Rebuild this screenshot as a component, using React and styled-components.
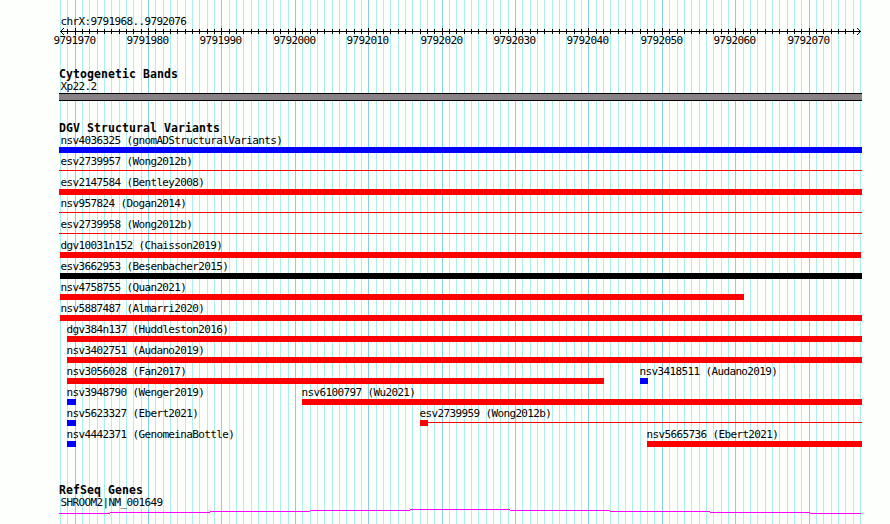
import React from 'react';
import styled, { createGlobalStyle } from 'styled-components';

const GlobalStyle = createGlobalStyle`
    body {
        margin: 0;
        background-color: #fdfffc;
    }
`;

const FIRST_BASE = 9791968;
const LAST_BASE = 9792077;
const LEFT = 60;
const WIDTH = 800;

const baseToX = base => Math.round(LEFT + ((base - FIRST_BASE) * WIDTH) / (LAST_BASE - FIRST_BASE));

const bases = Array.from({ length: LAST_BASE - FIRST_BASE + 1 }, (_, i) => FIRST_BASE + i);
const majorBases = bases.filter(base => base % 10 === 0);

const RED = '#ff0000';
const BLUE = '#0000ff';
const BLACK = '#000000';

const rows = [
    [{ name: 'nsv4036325 (gnomADStructuralVariants)', start: 59, end: 862, color: BLUE }],
    [{ name: 'esv2739957 (Wong2012b)', start: 59, end: 862, color: RED, thin: true }],
    [{ name: 'esv2147584 (Bentley2008)', start: 59, end: 862, color: RED }],
    [{ name: 'nsv957824 (Dogan2014)', start: 59, end: 862, color: RED, thin: true }],
    [{ name: 'esv2739958 (Wong2012b)', start: 59, end: 862, color: RED, thin: true }],
    [{ name: 'dgv10031n152 (Chaisson2019)', start: 60, end: 861, color: RED }],
    [{ name: 'esv3662953 (Besenbacher2015)', start: 60, end: 862, color: BLACK }],
    [{ name: 'nsv4758755 (Quan2021)', start: 60, end: 744, color: RED }],
    [{ name: 'nsv5887487 (Almarri2020)', start: 60, end: 862, color: RED }],
    [{ name: 'dgv384n137 (Huddleston2016)', start: 67, end: 862, color: RED }],
    [{ name: 'nsv3402751 (Audano2019)', start: 67, end: 862, color: RED }],
    [
        { name: 'nsv3056028 (Fan2017)', start: 67, end: 604, color: RED },
        { name: 'nsv3418511 (Audano2019)', start: 640, end: 648, color: BLUE },
    ],
    [
        { name: 'nsv3948790 (Wenger2019)', start: 67, end: 76, color: BLUE },
        { name: 'nsv6100797 (Wu2021)', start: 302, end: 862, color: RED },
    ],
    [
        { name: 'nsv5623327 (Ebert2021)', start: 67, end: 76, color: BLUE },
        { name: 'esv2739959 (Wong2012b)', start: 420, end: 862, color: RED, thin: true, block: 8 },
    ],
    [
        { name: 'nsv4442371 (GenomeinaBottle)', start: 67, end: 76, color: BLUE },
        { name: 'nsv5665736 (Ebert2021)', start: 647, end: 862, color: RED },
    ],
];

const geneSteps = [
    { width: 51, drop: 4 },
    { width: 100, drop: 3 },
    { width: 100, drop: 2 },
    { width: 100, drop: 1 },
    { width: 100, drop: 0 },
    { width: 100, drop: 1 },
    { width: 100, drop: 2 },
    { width: 100, drop: 3 },
    { width: 51, drop: 4 },
];

const Browser = styled.main`
    position: relative;
    width: 890px;
    height: 524px;
    overflow: hidden;
    background-color: #fdfffc;
    color: #000;
    font-family: 'DejaVu Sans Mono', monospace;
    font-size: 11px;
    letter-spacing: -0.63px;
`;

const GridLines = styled.svg`
    position: absolute;
    top: 0;
    left: 0;
`;

const Tracks = styled.div`
    position: relative;
    display: flex;
    flex-direction: column;
    padding-top: 16px;
`;

const Region = styled.div`
    height: 12px;
    line-height: 12px;
    padding-left: 60.5px;
`;

const Ruler = styled.svg`
    display: block;
    height: 7px;
`;

const RulerLabels = styled.div`
    display: flex;
    height: 12px;
    line-height: 12px;
    margin-bottom: 21px;
`;

const RulerLabel = styled.span`
    flex: none;
    width: 42px;
    margin-left: ${props => props.$gap}px;
    white-space: nowrap;
`;

const Track = styled.section`
    height: ${props => props.$height}px;
`;

const TrackTitle = styled.h2`
    height: 12px;
    margin: 0 0 ${props => props.$space || 0}px 59px;
    font-size: 11.5px;
    font-weight: bold;
    line-height: 12px;
    letter-spacing: 0.08px;
`;

const Label = styled.div`
    height: 12px;
    line-height: ${props => props.$line || 12}px;
    margin-left: ${props => props.$shift}px;
    white-space: nowrap;
`;

const Band = styled.div`
    box-sizing: border-box;
    width: 803px;
    height: 8px;
    margin: 1px 0 0 59px;
    border: solid #000;
    border-width: 1px 0;
    background-color: #888286;
`;

const VariantRow = styled.div`
    display: flex;
    height: 21px;
`;

const Variant = styled.div`
    flex: none;
    width: ${props => props.$width}px;
    margin-left: ${props => props.$gap}px;
`;

const Bar = styled.div`
    height: 6px;
    background-color: ${props => props.$color};
`;

const ThinBar = styled.div`
    display: flex;
    height: 6px;

    &::before {
        content: '';
        width: ${props => props.$block || 0}px;
        background-color: ${props => props.$color};
    }

    &::after {
        content: '';
        flex: 1;
        height: 1px;
        margin-top: 2px;
        background-color: ${props => props.$color};
    }
`;

const GeneLine = styled.div`
    display: flex;
    margin: 1px 0 0 59px;
`;

const GeneStep = styled.div`
    width: ${props => props.$width}px;
    height: 1px;
    margin-top: ${props => props.$drop}px;
    background-color: #ff00ff;
`;

const Grid = () => (
    <GridLines width="890" height="524" shapeRendering="crispEdges">
        {bases.map(base => (
            <rect
                key={base}
                x={baseToX(base)}
                y="0"
                width="1"
                height="524"
                fill={base % 10 === 0 ? '#87ceeb' : '#afeeee'}
            />
        ))}
    </GridLines>
);

const Scale = () => (
    <Ruler width="890" height="7" shapeRendering="crispEdges">
        <rect x="60" y="3" width="801" height="1" />
        {bases.slice(1, -1).map(base => (
            <rect
                key={base}
                x={baseToX(base)}
                y={base % 10 === 0 ? 0 : 1}
                width="1"
                height={base % 10 === 0 ? 7 : 5}
            />
        ))}
        {[1, 2, 3].map(i => (
            <g key={i}>
                <rect x={60 + i} y={3 - i} width="1" height="1" />
                <rect x={60 + i} y={3 + i} width="1" height="1" />
                <rect x={860 - i} y={3 - i} width="1" height="1" />
                <rect x={860 - i} y={3 + i} width="1" height="1" />
            </g>
        ))}
    </Ruler>
);

const App = () => {
    return (
        <>
            <GlobalStyle />
            <Browser>
                <Grid />
                <Tracks>
                    <Region>chrX:9791968..9792076</Region>
                    <Scale />
                    <RulerLabels>
                        {majorBases.map((base, i) => {
                            const previousEnd = i === 0 ? 0 : baseToX(majorBases[i - 1]) + 20.5;
                            return (
                                <RulerLabel key={base} $gap={baseToX(base) - 21.5 - previousEnd}>
                                    {base}
                                </RulerLabel>
                            );
                        })}
                    </RulerLabels>
                    <Track $height={54}>
                        <TrackTitle>Cytogenetic Bands</TrackTitle>
                        <Label $shift={60.5} $line={14}>Xp22.2</Label>
                        <Band />
                    </Track>
                    <Track $height={362}>
                        <TrackTitle $space={1}>DGV Structural Variants</TrackTitle>
                        {rows.map((row, r) => (
                            <VariantRow key={r}>
                                {row.map((item, i) => (
                                    <Variant
                                        key={item.name}
                                        $width={item.end - item.start}
                                        $gap={item.start - (i === 0 ? 0 : row[i - 1].end)}
                                    >
                                        <Label $shift={item.start <= LEFT ? 60.5 - item.start : -0.5}>
                                            {item.name}
                                        </Label>
                                        {item.thin
                                            ? <ThinBar $color={item.color} $block={item.block} />
                                            : <Bar $color={item.color} />}
                                    </Variant>
                                ))}
                            </VariantRow>
                        ))}
                    </Track>
                    <Track $height={40}>
                        <TrackTitle>RefSeq Genes</TrackTitle>
                        <Label $shift={60.5} $line={14}>SHROOM2|NM_001649</Label>
                        <GeneLine>
                            {geneSteps.map((step, i) => (
                                <GeneStep key={i} $width={step.width} $drop={step.drop} />
                            ))}
                        </GeneLine>
                    </Track>
                </Tracks>
            </Browser>
        </>
    );
};

export default App;
